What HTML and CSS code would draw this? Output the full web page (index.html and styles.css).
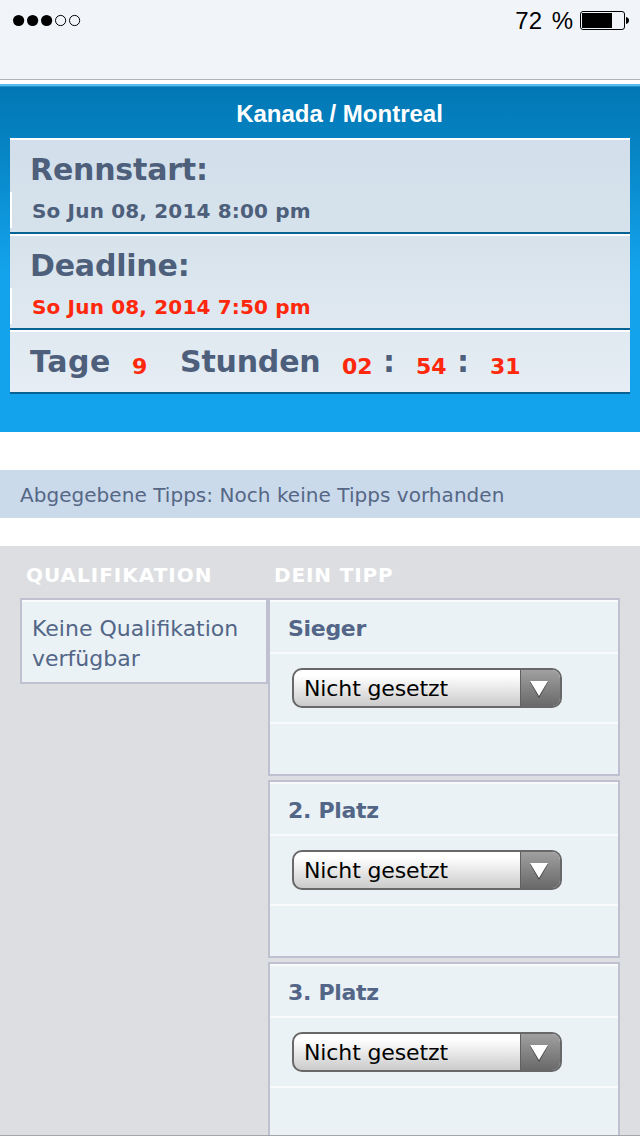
FILE: index.html
```html
<!DOCTYPE html>
<html lang="de">
<head>
<meta charset="utf-8">
<title>Kanada / Montreal</title>
<link rel="stylesheet" href="styles.css">
</head>
<body>
<div class="screen">
  <header class="status">
    <svg class="signal" width="70" height="14" viewBox="0 0 70 14">
      <circle cx="5.6" cy="6.5" r="5.6"/><circle cx="19.6" cy="6.5" r="5.6"/><circle cx="33.6" cy="6.5" r="5.6"/>
      <circle class="ring" cx="47.6" cy="6.5" r="5.1"/><circle class="ring" cx="61.6" cy="6.5" r="5.1"/>
    </svg>
    <div class="power">
      <span class="percent">72 %</span>
      <svg class="battery" width="49" height="19" viewBox="0 0 49 19">
        <rect class="ring" x=".5" y=".5" width="44" height="18" rx="2.5"/>
        <rect x="2" y="2" width="30" height="15"/>
        <path d="M46 6c2 .4 3 1.800 3 3.500s-1 3.100-3 3.500z"/>
      </svg>
    </div>
  </header>

  <section class="race">
    <h1 class="race-title">Kanada / Montreal</h1>
    <div class="rows">
      <div class="row">
        <h2 class="label">Rennstart:</h2>
        <div class="date">So Jun 08, 2014 8:00 pm</div>
      </div>
      <div class="row">
        <h2 class="label">Deadline:</h2>
        <div class="date red">So Jun 08, 2014 7:50 pm</div>
      </div>
      <div class="row countdown">
        <span class="word tage">Tage</span><span class="num days">9</span>
        <span class="word stunden">Stunden</span><span class="num hours">02</span>
        <span class="word colon">:</span><span class="num minutes">54</span>
        <span class="word colon">:</span><span class="num seconds">31</span>
      </div>
    </div>
  </section>

  <div class="notice">Abgegebene Tipps: Noch keine Tipps vorhanden</div>

  <main class="board">
    <section class="quali">
      <h3 class="heading wide">QUALIFIKATION</h3>
      <div class="box quali-box">Keine Qualifikation<br>verfügbar</div>
    </section>
    <section class="tips">
      <h3 class="heading">DEIN TIPP</h3>
      <div class="cards">
        <div class="box card">
          <div class="place">Sieger</div>
          <div class="field"><div class="select"><span class="value">Nicht gesetzt</span><span class="arrow"><svg width="20" height="18" viewBox="0 0 20 18"><path class="shade" d="M1 2h18l-9 16z"/><path class="tri" d="M1 1h18l-9 15z"/></svg></span></div></div>
          <div class="rest"></div>
        </div>
        <div class="box card">
          <div class="place">2. Platz</div>
          <div class="field"><div class="select"><span class="value">Nicht gesetzt</span><span class="arrow"><svg width="20" height="18" viewBox="0 0 20 18"><path class="shade" d="M1 2h18l-9 16z"/><path class="tri" d="M1 1h18l-9 15z"/></svg></span></div></div>
          <div class="rest"></div>
        </div>
        <div class="box card">
          <div class="place">3. Platz</div>
          <div class="field"><div class="select"><span class="value">Nicht gesetzt</span><span class="arrow"><svg width="20" height="18" viewBox="0 0 20 18"><path class="shade" d="M1 2h18l-9 16z"/><path class="tri" d="M1 1h18l-9 15z"/></svg></span></div></div>
          <div class="rest"></div>
        </div>
      </div>
    </section>
  </main>
</div>
</body>
</html>
```
FILE: styles.css
```css
* { box-sizing: border-box; }
body { margin: 0; background: #fff; font-family: "DejaVu Sans", Verdana, sans-serif; }
h1, h2, h3 { margin: 0; }
svg { display: block; }
.screen { width: 640px; height: 1136px; overflow: hidden; display: flex; flex-direction: column; position: relative; }
.screen::after { content: ""; position: absolute; left: 0; right: 0; bottom: 0; height: 1px; background: #a2a6ab; }

.status { flex: none; height: 80px; margin-bottom: 4px; padding: 11px 11px 0 13px; display: flex; justify-content: space-between; align-items: flex-start; background: #f1f5f9; border-bottom: 1px solid #b0b2b4; }
.signal { margin-top: 3px; }
.ring { fill: none; stroke: #000; stroke-width: 1; }
.power { display: flex; }
.percent { font: 24px/20px "Liberation Sans", Arial, sans-serif; word-spacing: 3px; margin-right: 7px; }

.race { flex: none; height: 348px; padding: 0 10px; background: linear-gradient(#0277b5 0, #0581c0 50px, #13a3ec 185px); border-top: 2px solid #52bdf1; box-shadow: inset 0 1px #2790c8; }
.race-title { height: 52px; font: bold 24px/56px "Liberation Sans", Arial, sans-serif; color: #fff; text-align: center; padding-left: 39px; }
.rows { background: linear-gradient(#d2dfeb, #d6e2eb 35%, #e6edf4); }
.row { height: 96px; border-top: 2px solid #fff; border-bottom: 2px solid #076394; color: #4d5f7b; }
.label { height: 52px; padding-left: 20px; font-size: 30px; line-height: 60px; letter-spacing: -.2px; }
.date { height: 36px; padding-left: 20px; border-left: 2px solid #fff; font-size: 20px; font-weight: bold; line-height: 38px; letter-spacing: .17px; }
.red, .num { color: #ff270c; }
.countdown { height: 64px; padding-left: 20px; display: flex; align-items: baseline; font-weight: bold; line-height: 60px; }
.word { font-size: 30px; }
.num { font-size: 22px; position: relative; top: 2px; }
.tage { width: 102px; letter-spacing: .6px; }
.days { width: 48px; }
.stunden { width: 162px; letter-spacing: -.2px; }
.hours { width: 41px; }
.colon { width: 33px; }
.minutes { width: 41px; }

.notice { flex: none; height: 48px; margin: 38px 0 28px; padding-left: 20px; background: #cadaeb; color: #566786; font-size: 20px; line-height: 50px; letter-spacing: .04px; }

.board { flex: none; height: 590px; padding: 0 20px; display: grid; grid-template-columns: 248px 352px; background: #dddee2; overflow: hidden; }
.heading { height: 52px; padding-left: 6px; color: #fff; font-size: 20px; line-height: 58px; letter-spacing: .85px; }
.wide { letter-spacing: .98px; }
.box { border: 2px solid #bfc1d1; background: #eaf2f6; color: #536687; font-size: 22px; }
.quali-box { height: 86px; padding: 14px 0 0 10px; line-height: 30px; box-shadow: inset 0 2px #f9fafc; }
.cards { display: flex; flex-direction: column; gap: 4px; }
.card { height: 178px; }
.place { height: 52px; padding-left: 18px; border-top: 2px solid #f9fafc; font-weight: bold; line-height: 53px; letter-spacing: -.3px; }
.field { height: 70px; padding: 14px 0 0 22px; border-top: 2px solid #f9fafc; }
.rest { height: 52px; border-top: 2px solid #f9fafc; }
.select { width: 270px; height: 40px; display: flex; border: 2px solid #686868; border-radius: 10px; overflow: hidden; background: linear-gradient(#fff, #fff 15%, #cbcbcb); color: #000; }
.value { width: 226px; padding-left: 10px; line-height: 38px; letter-spacing: -.12px; }
.arrow { width: 40px; padding: 10px 0 0 8px; border-left: 1px solid #606060; background: linear-gradient(#a0a0a0, #696969); }
.shade { fill: #444; }
.tri { fill: #fff; }
```
